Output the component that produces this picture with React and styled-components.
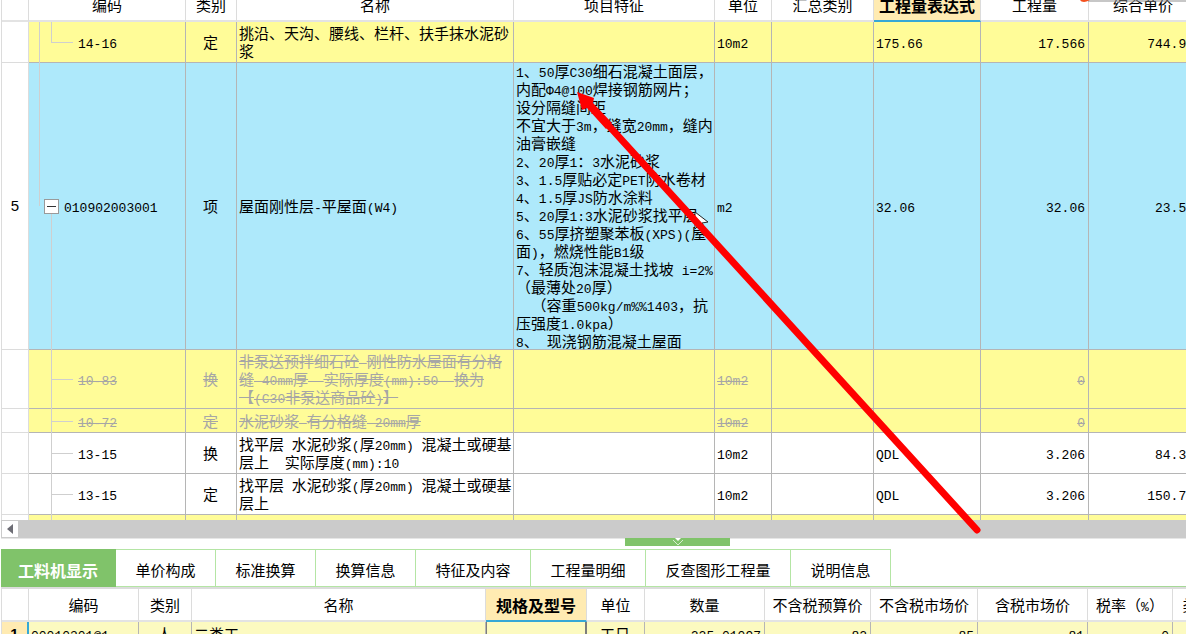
import React, { useState } from "react";
import styled, { createGlobalStyle, css } from "styled-components";

const tabs = [
  { name: "工料机显示", width: 115 },
  { name: "单价构成", width: 100 },
  { name: "标准换算", width: 100 },
  { name: "换算信息", width: 100 },
  { name: "特征及内容", width: 115 },
  { name: "工程量明细", width: 115 },
  { name: "反查图形工程量", width: 145 },
  { name: "说明信息", width: 100 },
];

const billColumns = [
  { name: "", width: 27 },
  { name: "编码", width: 157 },
  { name: "类别", width: 51 },
  { name: "名称" },
  { name: "项目特征", width: 201 },
  { name: "单位", width: 57 },
  { name: "汇总类别", width: 102 },
  { name: "工程量表达式", width: 107, active: true },
  { name: "工程量", width: 108 },
  { name: "综合单价", width: 109 },
];

const features = [
  "1、50厚C30细石混凝土面层，",
  "内配Φ4@100焊接钢筋网片；",
  "设分隔缝间距",
  "不宜大于3m，缝宽20mm，缝内",
  "油膏嵌缝",
  "2、20厚1：3水泥砂浆",
  "3、1.5厚贴必定PET防水卷材",
  "4、1.5厚JS防水涂料",
  "5、20厚1:3水泥砂浆找平层",
  "6、55厚挤塑聚苯板(XPS)(屋",
  "面)，燃烧性能B1级",
  "7、轻质泡沫混凝土找坡 i=2%",
  "（最薄处20厚）",
  "  （容重500kg/m%%1403，抗",
  "压强度1.0kpa）",
  "8、 现浇钢筋混凝土屋面",
];

const billRows = [
  {
    code: "14-16",
    type: "定",
    name: ["挑沿、天沟、腰线、栏杆、扶手抹水泥砂", "浆"],
    unit: "10m2",
    expr: "175.66",
    qty: "17.566",
    price: "744.93",
    tone: "yellow",
    height: 41,
    tree: "last",
  },
  {
    no: "5",
    code: "010902003001",
    type: "项",
    name: ["屋面刚性层-平屋面(W4)"],
    features,
    unit: "m2",
    expr: "32.06",
    qty: "32.06",
    price: "23.52",
    tone: "blue",
    height: 287,
    tree: "parent",
  },
  {
    code: "10-83",
    type: "换",
    name: [
      "非泵送预拌细石砼 刚性防水屋面有分格",
      "缝 40mm厚  实际厚度(mm):50  换为",
      "【(C30非泵送商品砼)】",
    ],
    unit: "10m2",
    qty: "0",
    price: "0",
    tone: "yellow",
    height: 59,
    removed: true,
    tree: "child",
  },
  {
    code: "10-72",
    type: "定",
    name: ["水泥砂浆 有分格缝 20mm厚"],
    unit: "10m2",
    qty: "0",
    price: "0",
    tone: "yellow",
    height: 24,
    removed: true,
    tree: "child",
  },
  {
    code: "13-15",
    type: "换",
    name: ["找平层 水泥砂浆(厚20mm) 混凝土或硬基", "层上  实际厚度(mm):10"],
    unit: "10m2",
    expr: "QDL",
    qty: "3.206",
    price: "84.38",
    height: 41,
    tree: "child",
  },
  {
    code: "13-15",
    type: "定",
    name: ["找平层 水泥砂浆(厚20mm) 混凝土或硬基", "层上"],
    unit: "10m2",
    expr: "QDL",
    qty: "3.206",
    price: "150.78",
    height: 41,
    tree: "child",
  },
  { tone: "yellow", height: 41, tree: "line" },
];

const resourceColumns = [
  { name: "", width: 27 },
  { name: "编码", width: 110 },
  { name: "类别", width: 53 },
  { name: "名称" },
  { name: "规格及型号", width: 101, active: true },
  { name: "单位", width: 58 },
  { name: "数量", width: 120 },
  { name: "不含税预算价", width: 106 },
  { name: "不含税市场价", width: 107 },
  { name: "含税市场价", width: 110 },
  { name: "税率（%）", width: 85 },
  { name: "类别", width: 50 },
];

// half-width characters get the narrow monospace face, the rest stays CJK
const Text = ({ children = "" }) =>
  children
    .split(/([\x20-\x7eΦ]+)/)
    .map((part, i) => (i % 2 ? <Latin key={i}>{part}</Latin> : part));

const Columns = ({ items }) => (
  <colgroup>
    {items.map((c, i) => (
      <Col key={i} $width={c.width} />
    ))}
  </colgroup>
);

const TreeNode = ({ row }) => (
  <Node $level={row.tree === "parent" ? 1 : 2}>
    {row.tree === "last" && (
      <>
        <Outer />
        <Inner $to="50%" />
        <Branch />
      </>
    )}
    {row.tree === "parent" && (
      <>
        <Outer $to="50%" />
        <Inner $from="50%" />
        <Expander type="button" aria-label="收起" />
      </>
    )}
    {row.tree === "child" && (
      <>
        <Inner />
        <Branch />
      </>
    )}
    {row.tree === "line" && <Inner />}
    <Label $removed={row.removed}>
      <Text>{row.code}</Text>
    </Label>
  </Node>
);

const App = () => {
  const [active, setActive] = useState("工料机显示");
  return (
    <Page>
      <GlobalStyle />
      <BillPane>
        <BillTable>
          <Columns items={billColumns} />
          <thead>
            <tr>
              {billColumns.map((c, i) => (
                <HeadCell key={i} $active={c.active}>
                  {c.name}
                </HeadCell>
              ))}
            </tr>
          </thead>
          <tbody>
            {billRows.map((row, i) => (
              <Row key={i} $tone={row.tone} $height={row.height}>
                <NumberCell>{row.no}</NumberCell>
                <TreeCell>
                  <TreeNode row={row} />
                </TreeCell>
                <Cell $align="center" $removed={row.removed}>
                  {row.type}
                </Cell>
                <Cell $removed={row.removed}>
                  {row.name?.map((line) => (
                    <Line key={line}>
                      <Text>{line}</Text>
                    </Line>
                  ))}
                </Cell>
                <Cell>
                  {row.features && (
                    <Features>
                      {row.features.map((line) => (
                        <Line key={line}>
                          <Text>{line}</Text>
                        </Line>
                      ))}
                    </Features>
                  )}
                </Cell>
                <Cell $removed={row.removed}>
                  <Text>{row.unit}</Text>
                </Cell>
                <Cell />
                <Cell>
                  <Text>{row.expr}</Text>
                </Cell>
                <Cell $align="right" $removed={row.removed}>
                  <Text>{row.qty}</Text>
                </Cell>
                <Cell $align="right">
                  <Text>{row.price}</Text>
                </Cell>
              </Row>
            ))}
          </tbody>
        </BillTable>
      </BillPane>
      <ScrollBar>
        <ScrollButton type="button" aria-label="向左滚动">
          <svg width="6" height="10" viewBox="0 0 6 10">
            <path d="M6 0v10L0 5z" fill="#6d6d75" />
          </svg>
        </ScrollButton>
      </ScrollBar>
      <Splitter>
        <Handle type="button" aria-label="收起面板">
          <svg width="12" height="8" viewBox="0 0 12 8">
            <path d="M3 0h6L6 3z" fill="#fff" />
            <path d="M1 2l5 5 5-5" fill="none" stroke="#d8f0cf" />
          </svg>
        </Handle>
      </Splitter>
      <TabBar role="tablist">
        {tabs.map((t) => (
          <Tab
            key={t.name}
            type="button"
            role="tab"
            aria-selected={active === t.name}
            $width={t.width}
            $active={active === t.name}
            onClick={() => setActive(t.name)}>
            {t.name}
          </Tab>
        ))}
      </TabBar>
      <ResourcePane>
        <ResourceTable>
          <Columns items={resourceColumns} />
          <thead>
            <tr>
              {resourceColumns.map((c, i) => (
                <HeadCell key={i} $active={c.active}>
                  <Text>{c.name}</Text>
                </HeadCell>
              ))}
            </tr>
          </thead>
          <tbody>
            <Row $tone="cream" $height={25}>
              <CurrentCell>1</CurrentCell>
              <Cell>
                <Text>00010301@1</Text>
              </Cell>
              <Cell $align="center">人</Cell>
              <Cell>二类工</Cell>
              <FocusCell />
              <Cell $align="center">工日</Cell>
              <Cell $align="right">
                <Text>225.01097</Text>
              </Cell>
              <Cell $align="right">
                <Text>82</Text>
              </Cell>
              <Cell $align="right">
                <Text>85</Text>
              </Cell>
              <Cell $align="right">
                <Text>81</Text>
              </Cell>
              <Cell $align="right">
                <Text>0</Text>
              </Cell>
              <Cell />
            </Row>
          </tbody>
        </ResourceTable>
      </ResourcePane>
      <Overlay width="1186" height="634" viewBox="0 0 1186 634">
        <path
          d="M695 212v17l4-4 3 5 3-2-3-5 6-1z"
          fill="#fff"
          stroke="#222"
        />
        <path
          d="M609 126L977 530"
          stroke="#f00"
          strokeWidth="7"
          strokeLinecap="round"
        />
        <path d="M577 92l17 6-1 5 19 20-6 6-19-21-5 2z" fill="#f00" />
        <path d="M1088 1h98" stroke="#8f8f8f" />
        <path d="M1080 0h10q-4 2-6 2-3 0-4-2z" fill="#f4511e" />
      </Overlay>
    </Page>
  );
};

const GlobalStyle = createGlobalStyle`
  * {
    box-sizing: border-box;
  }
  body {
    margin: 0;
    overflow: hidden;
    background-color: #fff;
  }
`;

const Page = styled.div`
  position: relative;
  display: flex;
  flex-direction: column;
  height: 100vh;
  overflow: hidden;
  padding-left: 1px;
  color: #000;
  font-family: "Noto Sans CJK SC", sans-serif;
  font-size: 15px;
  line-height: 18px;
  button {
    font: inherit;
    margin: 0;
    padding: 0;
  }
`;

const BillPane = styled.div`
  flex: none;
  height: 520px;
  overflow: hidden;
`;

const Table = styled.table`
  table-layout: fixed;
  border-collapse: separate;
  border-spacing: 0;
  border-left: 1px solid #dcdcdc;
`;

// the header row is scrolled partly out of the pane
const BillTable = styled(Table)`
  width: calc(100% + 12px);
  margin-top: -11px;
`;

const ResourceTable = styled(Table)`
  width: calc(100% + 37px);
`;

const Col = styled.col`
  width: ${(p) => (p.$width ? `${p.$width}px` : "auto")};
`;

const HeadCell = styled.th`
  height: 33px;
  padding: 0;
  font-weight: 400;
  text-align: center;
  white-space: nowrap;
  border-right: 1px solid #dcdcdc;
  border-bottom: 2px solid #e3e3e3;
  ${(p) =>
    p.$active &&
    css`
      font-size: 16px;
      font-weight: 700;
      background-color: #ffebb2;
      border-bottom-color: #35a8d6;
    `}
`;

const tones = {
  yellow: "#fffc98",
  blue: "#aee9fb",
  cream: "#fcfac0",
};

const Row = styled.tr`
  height: ${(p) => p.$height}px;
  background-color: ${(p) => tones[p.$tone] || "#fff"};
`;

const removed = css`
  color: #a6a6a6;
  text-decoration: line-through;
`;

const Cell = styled.td`
  padding: 0 3px 0 2px;
  text-align: ${(p) => p.$align || "left"};
  vertical-align: middle;
  white-space: pre;
  border-right: 1px solid #b5b5b5;
  border-bottom: 1px solid #b5b5b5;
  ${(p) => p.$removed && removed}
`;

const NumberCell = styled(Cell)`
  padding: 0;
  text-align: center;
  background-color: #fff;
  border-color: #dcdcdc;
  font-family: "Liberation Sans", sans-serif;
`;

const CurrentCell = styled(NumberCell)`
  font-weight: 700;
  background-color: #ffebb2;
  border-right: 2px solid #35a8d6;
`;

const FocusCell = styled(Cell)`
  border-left: 1px solid #7d7d7d;
  border-right: 2px solid #7d7d7d;
`;

const TreeCell = styled(Cell)`
  padding: 0;
  position: relative;
`;

const Node = styled.div`
  padding-left: ${(p) => (p.$level === 1 ? 35 : 49)}px;
`;

const Label = styled.span`
  ${(p) => p.$removed && removed}
`;

const Guide = styled.span`
  position: absolute;
  top: ${(p) => p.$from || 0};
  bottom: ${(p) => (p.$to ? p.$to : "-1px")};
  border-left: 1px solid #cfcfcf;
`;

const Outer = styled(Guide)`
  left: 10px;
`;

const Inner = styled(Guide)`
  left: 22px;
`;

const Branch = styled.span`
  position: absolute;
  left: 22px;
  top: 50%;
  width: 22px;
  border-top: 1px solid #cfcfcf;
`;

const Expander = styled.button`
  position: absolute;
  left: 15px;
  top: calc(50% - 7px);
  width: 15px;
  height: 15px;
  border: 1px solid #9a9a9a;
  background: linear-gradient(#333, #333) center / 9px 1px no-repeat #fff;
`;

const Line = styled.div`
  height: 18px;
  text-decoration: inherit;
`;

const Features = styled.div`
  display: flex;
  flex-direction: column;
  justify-content: center;
  height: 286px;
  ${Line} {
    flex: none;
  }
`;

// inline-block keeps the strike line at the height of the smaller glyphs
const Latin = styled.span`
  display: inline-block;
  font-family: "Liberation Mono", monospace;
  font-size: 13px;
  line-height: 13px;
  text-decoration: inherit;
`;

const ScrollBar = styled.div`
  flex: none;
  display: flex;
  height: 18px;
  padding: 1px;
  background-color: #cbcbcb;
`;

const ScrollButton = styled.button`
  display: flex;
  align-items: center;
  justify-content: center;
  width: 16px;
  border: none;
  background-color: #fff;
`;

const Splitter = styled.div`
  flex: none;
  display: flex;
  justify-content: center;
  height: 11px;
  padding-left: 168px;
  box-shadow: inset 0 1px #e6e6e6;
`;

const Handle = styled.button`
  display: flex;
  justify-content: center;
  width: 105px;
  height: 8px;
  border: none;
  background-color: #80c36a;
`;

const TabBar = styled.div`
  flex: none;
  display: flex;
  height: 40px;
  border-bottom: 2px solid #dcdcdc;
  box-shadow: inset 0 -1px #a5d896;
`;

const Tab = styled.button`
  && {
    padding-top: 3px;
  }
  width: ${(p) => p.$width}px;
  height: 38px;
  border: 1px solid #b4e5a4;
  border-left: none;
  background-color: #fff;
  color: #000;
  ${(p) =>
    p.$active &&
    css`
      && {
        font-size: 16px;
        font-weight: 700;
      }
      color: #fff;
      background-color: #80c36a;
      border-color: #80c36a;
    `}
`;

const ResourcePane = styled.div`
  flex: 1;
  min-height: 0;
  overflow: hidden;
`;

const Overlay = styled.svg`
  position: absolute;
  left: 0;
  top: 0;
  pointer-events: none;
  fill: none;
`;

export default App;
